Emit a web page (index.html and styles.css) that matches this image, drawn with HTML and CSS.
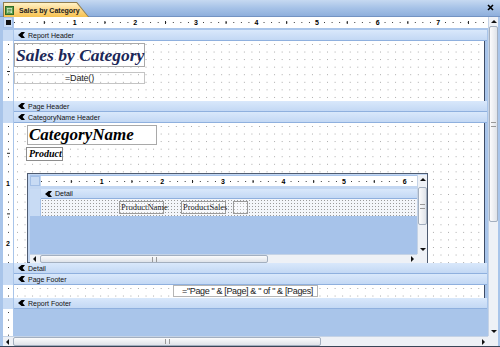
FILE: index.html
```html
<!DOCTYPE html>
<html>
<head>
<meta charset="utf-8">
<title>Sales by Category</title>
<link rel="stylesheet" href="styles.css">
</head>
<body>
<div class="win">
  <div class="titlebar">
    <div class="tab">
      <div class="tab-in">
        <svg class="tab-icon" width="9" height="9" viewBox="0 0 9 9"><rect x="0.5" y="0.5" width="8" height="8" fill="#5c9f4c" stroke="#2f6a27"/><rect x="2" y="2" width="5" height="5" fill="#d6ecc9"/><path d="M2.5 3.3h4M2.5 4.8h4M2.5 6.3h3" stroke="#3b7a31" stroke-width="0.8"/></svg>
        <span class="tab-text">Sales by Category</span>
      </div>
    </div>
    <svg class="close" width="7" height="7" viewBox="0 0 7 7"><path d="M1 1L6 6M6 1L1 6" stroke="#000" stroke-width="1.6"/></svg>
  </div>

  <div class="body">
    <div class="main">
      <div class="rrow ruler-row">
        <div class="lcol corner"><span class="sq"></span></div>
        <div class="hruler">
          <div class="inch"><span class="n">1</span></div>
          <div class="inch"><span class="n">2</span></div>
          <div class="inch"><span class="n">3</span></div>
          <div class="inch"><span class="n">4</span></div>
          <div class="inch"><span class="n">5</span></div>
          <div class="inch"><span class="n">6</span></div>
          <div class="inch"><span class="n">7</span></div>
        </div>
      </div>
      <div class="spacer"></div>

      <div class="rrow bar-row">
        <div class="lcol"></div>
        <div class="bar"><svg class="bicon" width="7" height="6" viewBox="0 0 7 6"><path d="M0 3L3.6 0H7L4.6 3L7 6H3.6Z" fill="#000"/></svg>Report Header</div>
      </div>
      <div class="rrow sec-row rh">
        <div class="lcol vruler"></div>
        <div class="sec grid">
          <div class="ctl title-lbl">Sales by Category</div>
          <div class="ctl date-box">=Date()</div>
        </div>
      </div>

      <div class="rrow bar-row">
        <div class="lcol"></div>
        <div class="bar"><svg class="bicon" width="7" height="6" viewBox="0 0 7 6"><path d="M0 3L3.6 0H7L4.6 3L7 6H3.6Z" fill="#000"/></svg>Page Header</div>
      </div>
      <div class="rrow bar-row">
        <div class="lcol"></div>
        <div class="bar"><svg class="bicon" width="7" height="6" viewBox="0 0 7 6"><path d="M0 3L3.6 0H7L4.6 3L7 6H3.6Z" fill="#000"/></svg>CategoryName Header</div>
      </div>
      <div class="rrow sec-row cn">
        <div class="lcol vruler">
          <div class="vinch"><span class="n">1</span></div>
          <div class="vinch"><span class="n">2</span></div>
        </div>
        <div class="sec grid hgrid">
          <div class="ctl cat-lbl">CategoryName</div>
          <div class="ctl prod-lbl">Product</div>

          <div class="subrep">
            <div class="sub-top">
              <div class="sub-main">
                <div class="sub-ruler-row">
                  <div class="sub-lcol corner"></div>
                  <div class="sub-ruler hruler">
                    <div class="inch"><span class="n">1</span></div>
                    <div class="inch"><span class="n">2</span></div>
                    <div class="inch"><span class="n">3</span></div>
                    <div class="inch"><span class="n">4</span></div>
                    <div class="inch"><span class="n">5</span></div>
                    <div class="inch"><span class="n">6</span></div>
                  </div>
                </div>
                <div class="sub-spacer"></div>
                <div class="sub-bar-row">
                  <div class="sub-lcol"></div>
                  <div class="bar sub-bar"><svg class="bicon" width="7" height="6" viewBox="0 0 7 6"><path d="M0 3L3.6 0H7L4.6 3L7 6H3.6Z" fill="#000"/></svg>Detail</div>
                </div>
                <div class="sub-det-row">
                  <div class="sub-lcol vruler"></div>
                  <div class="sub-det">
                    <div class="ctl pname">ProductName</div>
                    <div class="ctl psales">ProductSales</div>
                    <div class="ctl pextra"></div>
                  </div>
                </div>
              </div>
              <div class="vscroll sub-vscroll">
                <div class="arr"><span class="tri up"></span></div>
                <div class="track">
                  <div class="thumb sub-vthumb"><span class="grip-v"></span></div>
                </div>
                <div class="arr"><span class="tri down"></span></div>
              </div>
            </div>
            <div class="sub-hrow">
              <div class="hscroll sub-hscroll">
                <div class="arr"><span class="tri left"></span></div>
                <div class="track">
                  <div class="thumb sub-hthumb"><span class="grip-h"></span></div>
                </div>
                <div class="arr"><span class="tri right"></span></div>
              </div>
              <div class="sbcorner"></div>
            </div>
          </div>
        </div>
      </div>

      <div class="rrow bar-row">
        <div class="lcol"></div>
        <div class="bar"><svg class="bicon" width="7" height="6" viewBox="0 0 7 6"><path d="M0 3L3.6 0H7L4.6 3L7 6H3.6Z" fill="#000"/></svg>Detail</div>
      </div>
      <div class="rrow bar-row">
        <div class="lcol"></div>
        <div class="bar"><svg class="bicon" width="7" height="6" viewBox="0 0 7 6"><path d="M0 3L3.6 0H7L4.6 3L7 6H3.6Z" fill="#000"/></svg>Page Footer</div>
      </div>
      <div class="rrow sec-row pf">
        <div class="lcol vruler"></div>
        <div class="sec grid">
          <div class="ctl page-box">="Page " &amp; [Page] &amp; " of " &amp; [Pages]</div>
        </div>
      </div>
      <div class="rrow bar-row">
        <div class="lcol"></div>
        <div class="bar"><svg class="bicon" width="7" height="6" viewBox="0 0 7 6"><path d="M0 3L3.6 0H7L4.6 3L7 6H3.6Z" fill="#000"/></svg>Report Footer</div>
      </div>
      <div class="rrow empty-row">
        <div class="lcol vruler"></div>
        <div class="empty"></div>
      </div>
    </div>

    <div class="vscroll main-vscroll">
      <div class="arr"><span class="tri up"></span></div>
      <div class="track">
        <div class="thumb main-vthumb"><span class="grip-v"></span></div>
      </div>
      <div class="arr"><span class="tri down"></span></div>
    </div>
  </div>

  <div class="hrow">
    <div class="hscroll main-hscroll">
      <div class="arr"><span class="tri left"></span></div>
      <div class="track">
        <div class="thumb main-hthumb"><span class="grip-h"></span></div>
      </div>
      <div class="arr"><span class="tri right"></span></div>
    </div>
    <div class="sbcorner"></div>
  </div>
</div>
</body>
</html>
```

FILE: styles.css
```css
:root {
  --in: 60.6px;
  --blue: #a9c5ea;
}
* { box-sizing: border-box; margin: 0; padding: 0; }
html, body { width: 500px; height: 347px; overflow: hidden; }
body { font-family: "Liberation Sans", Arial, sans-serif; color: #000; background: #fff; }

.win {
  width: 500px; height: 347px;
  display: flex; flex-direction: column;
  background: var(--blue);
  border-bottom: 1px solid #3a4658;
}

/* title bar */
.titlebar {
  flex: none; height: 17px;
  display: flex; align-items: flex-end; justify-content: space-between;
  padding: 0 6px 0 3px;
  background: linear-gradient(#c6d9f1, #a6c2e7 50%, #8eafdc);
  border-bottom: 1px solid #7393c2;
}
.tab {
  width: 86px; height: 15px;
  margin-bottom: -1px;
  background: #8f7d4f;
  clip-path: polygon(0 0, 74px 0, 86px 15px, 0 15px);
  padding: 1px 0 0 1px;
}
.tab-in {
  width: 84px; height: 14px;
  clip-path: polygon(0 0, 72.5px 0, 84px 14px, 0 14px);
  background: linear-gradient(#fff2c6, #fcd98e 45%, #f6c250);
  display: flex; align-items: center; gap: 5px; padding-left: 1px;
}
.tab-icon { flex: none; }
.tab-text { font-size: 7px; font-weight: bold; color: #1a1a1a; white-space: nowrap; }
.close { align-self: center; margin-top: -1px; }

/* body */
.body { flex: none; height: 319px; display: flex; }
.main { width: 488px; flex: none; padding-left: 3px; display: flex; flex-direction: column; }

.rrow { display: flex; flex: none; }
.lcol { width: 10px; flex: none; margin-right: 1px; background: #c8dbf4; }

.ruler-row { height: 11px; }
.corner {
  background: #c9dcf5; border: 1px solid #a3bfe6;
  display: flex; align-items: center; justify-content: center;
}
.sq { width: 5px; height: 5px; background: #111; }

.hruler {
  width: 474px; height: 100%;
  display: flex;
  background-color: #fff;
  background-image:
    linear-gradient(to right, transparent 30px, #222 30px, #222 31px, transparent 31px),
    conic-gradient(at 1px 1px, transparent 75%, #333 0);
  background-size: var(--in) 3px, 7.575px 11px;
  background-position: 0 4px, 0 5px;
  background-repeat: repeat-x, repeat-x;
  overflow: hidden;
}
.inch {
  width: var(--in); flex: none;
  display: flex; align-items: center; justify-content: flex-end;
}
.inch .n {
  font-size: 7px; line-height: 7px; font-weight: bold;
  background: #fff; padding: 0 1px;
  margin-right: -3px; position: relative; z-index: 1;
}

.spacer { height: 2px; flex: none; }

.bar-row { height: 11px; }
.bar {
  width: 473px; height: 100%;
  background: linear-gradient(#d9e8fb, #c3d8f4);
  border-bottom: 1px solid #8fb0de;
  display: flex; align-items: center; gap: 3px;
  padding-left: 4px;
  font-size: 7px; color: #111; white-space: nowrap;
}
.bicon { flex: none; }

/* vertical ruler */
.vruler {
  background-color: #fff;
  background-image:
    linear-gradient(to bottom, transparent 30px, #222 30px, #222 31px, transparent 31px),
    conic-gradient(at 1px 1px, transparent 75%, #333 0);
  background-size: 3px var(--in), 10px 7.575px;
  background-position: 3.5px 0, 4.5px 3px;
  background-repeat: repeat-y, repeat-y;
  display: flex; flex-direction: column;
  overflow: hidden;
}
.vinch {
  height: var(--in); flex: none;
  display: flex; flex-direction: column; justify-content: flex-end; align-items: center;
}
.vinch .n {
  font-size: 7px; line-height: 7px; font-weight: bold;
  background: #fff; padding: 1px 0;
  margin-bottom: -4px; position: relative; z-index: 1;
}

/* sections */
.sec {
  width: 471px; height: 100%;
  border-right: 1px solid #3e4c66;
  position: relative;
  background-color: #fff;
}
.grid {
  background-image:
    linear-gradient(to right, transparent 61px, #8a8a8a 61px, #8a8a8a 62px, transparent 62px),
    conic-gradient(at 1px 1px, transparent 75%, #a3a3a3 0);
  background-size: var(--in) 100%, 7.575px 7.575px;
  background-position: 0 0, 3px 3px;
}
.hgrid {
  background-image:
    linear-gradient(to bottom, transparent 61px, #8a8a8a 61px, #8a8a8a 62px, transparent 62px),
    linear-gradient(to right, transparent 61px, #8a8a8a 61px, #8a8a8a 62px, transparent 62px),
    conic-gradient(at 1px 1px, transparent 75%, #a3a3a3 0);
  background-size: 100% var(--in), var(--in) 100%, 7.575px 7.575px;
  background-position: 0 0, 0 0, 3px 3px;
}
.rh { height: 60px; }
.cn { height: 140px; }
.pf { height: 13px; }
.empty-row { height: 27px; }
.empty { flex: 1; }

/* controls on design canvas */
.ctl { position: absolute; white-space: nowrap; }
.title-lbl {
  left: 0; top: 2px; width: 131px; height: 24px;
  border: 1px solid #a9a9a9;
  font-family: "Liberation Serif", "Times New Roman", serif;
  font-weight: bold; font-style: italic;
  font-size: 17.5px; line-height: 22px;
  color: #1b2757; padding-left: 1px;
}
.date-box {
  left: 0; top: 31px; width: 131px; height: 12px;
  border: 1px solid #c4c4c4;
  font-size: 9px; line-height: 10px; text-align: center;
  color: #222; letter-spacing: -0.2px;
}
.cat-lbl {
  left: 13px; top: 2px; width: 130px; height: 20px;
  border: 1px solid #a9a9a9; background: #fff;
  font-family: "Liberation Serif", "Times New Roman", serif;
  font-weight: bold; font-style: italic;
  font-size: 17px; line-height: 18px; padding-left: 1px;
}
.prod-lbl {
  left: 12px; top: 24px; width: 37px; height: 14px;
  border: 1px solid #8d8d8d; background: #fff;
  font-family: "Liberation Serif", "Times New Roman", serif;
  font-weight: bold; font-style: italic;
  font-size: 10px; line-height: 12px; padding-left: 2px;
}
.page-box {
  left: 159px; top: 0; width: 145px; height: 12px;
  border: 1px solid #b5b5b5; background: #fff;
  font-size: 9px; line-height: 10px; text-align: center;
  color: #222; letter-spacing: -0.35px; padding-left: 4px;
}

/* subreport */
.subrep {
  position: absolute; left: 13px; top: 50px;
  width: 401px; height: 90px;
  border: 1px solid #4e5b70;
  background: #c3d7f2;
  padding: 1px 0 0 2px;
  display: flex; flex-direction: column;
}
.sub-top { flex: none; height: 79px; display: flex; }
.sub-main { width: 387px; flex: none; display: flex; flex-direction: column; background: #a7c3ea; padding-top: 1px; }
.sub-ruler-row { height: 10px; flex: none; display: flex; background: #c3d7f2; }
.sub-lcol { width: 10px; flex: none; margin-right: 1px; background: #c8dbf4; }
.sub-ruler { width: 376px; }
.sub-spacer { height: 3px; flex: none; background: #c3d7f2; }
.sub-bar-row { height: 10px; flex: none; display: flex; background: #c3d7f2; }
.sub-bar { width: 376px; }
.sub-det-row { height: 17px; flex: none; display: flex; }
.sub-det-row .vruler { background-position: 3.5px -8px, 4.5px 6px; }
.sub-det {
  width: 376px; height: 100%; position: relative;
  background-color: #f4f6fa;
  background-image:
    linear-gradient(to right, transparent 61px, #7e7e7e 61px, #7e7e7e 62px, transparent 62px),
    conic-gradient(at 1px 1px, transparent 75%, #9a9a9a 0);
  background-size: var(--in) 100%, 3px 3px;
  background-position: 0 0, 1px 1px;
}
.pname, .psales, .pextra {
  top: 2px; height: 13px;
  border: 1px solid #9a9a9a; background: rgba(255,255,255,0.35);
  font-family: "Liberation Serif", "Times New Roman", serif;
  font-size: 8.5px; line-height: 11px; color: #222; padding-left: 1px;
}
.pname { left: 78px; width: 45px; }
.psales { left: 140px; width: 45px; }
.pextra { left: 192px; width: 15px; }

.sub-hrow { height: 9px; flex: none; display: flex; }
.sub-hscroll { width: 387px; }
.sub-vscroll { width: 10px; }
.sub-vthumb { height: 38px; margin-top: 3px; }
.sub-hthumb { width: 228px; margin-left: 1px; }

/* scrollbars */
.vscroll {
  width: 10px; flex: none;
  display: flex; flex-direction: column;
  background: #eef1f6;
  border-left: 1px solid #c5d3e6;
}
.hscroll {
  height: 100%; flex: none;
  display: flex;
  background: #eef1f6;
  border-top: 1px solid #c5d3e6;
}
.main-hscroll { width: 485px; }
.arr { flex: none; width: 9px; height: 9px; display: flex; align-items: center; justify-content: center; }
.vscroll .arr { width: 100%; }
.hscroll .arr { height: 100%; }
.track { flex: 1; display: flex; }
.vscroll .track { flex-direction: column; }
.thumb {
  border: 1px solid #a3afbf; border-radius: 2px;
  display: flex; align-items: center; justify-content: center;
}
.vscroll .thumb { background: linear-gradient(to right, #fbfbfc, #dfe3e9); }
.hscroll .thumb { background: linear-gradient(#fbfbfc, #dfe3e9); }
.main-vthumb { height: 196px; }
.main-hthumb { width: 308px; margin-left: 1px; }
.grip-v { width: 5px; height: 5px; border-top: 1px solid #999; border-bottom: 1px solid #999; }
.grip-h { width: 5px; height: 5px; border-left: 1px solid #999; border-right: 1px solid #999; }
.tri { width: 0; height: 0; }
.tri.up { border-left: 3px solid transparent; border-right: 3px solid transparent; border-bottom: 3px solid #111; }
.tri.down { border-left: 3px solid transparent; border-right: 3px solid transparent; border-top: 3px solid #111; }
.tri.left { border-top: 3px solid transparent; border-bottom: 3px solid transparent; border-right: 3px solid #111; }
.tri.right { border-top: 3px solid transparent; border-bottom: 3px solid transparent; border-left: 3px solid #111; }
.sbcorner { width: 10px; flex: none; background: #eef1f6; }

.hrow { flex: none; height: 10px; display: flex; padding-left: 3px; }
```
